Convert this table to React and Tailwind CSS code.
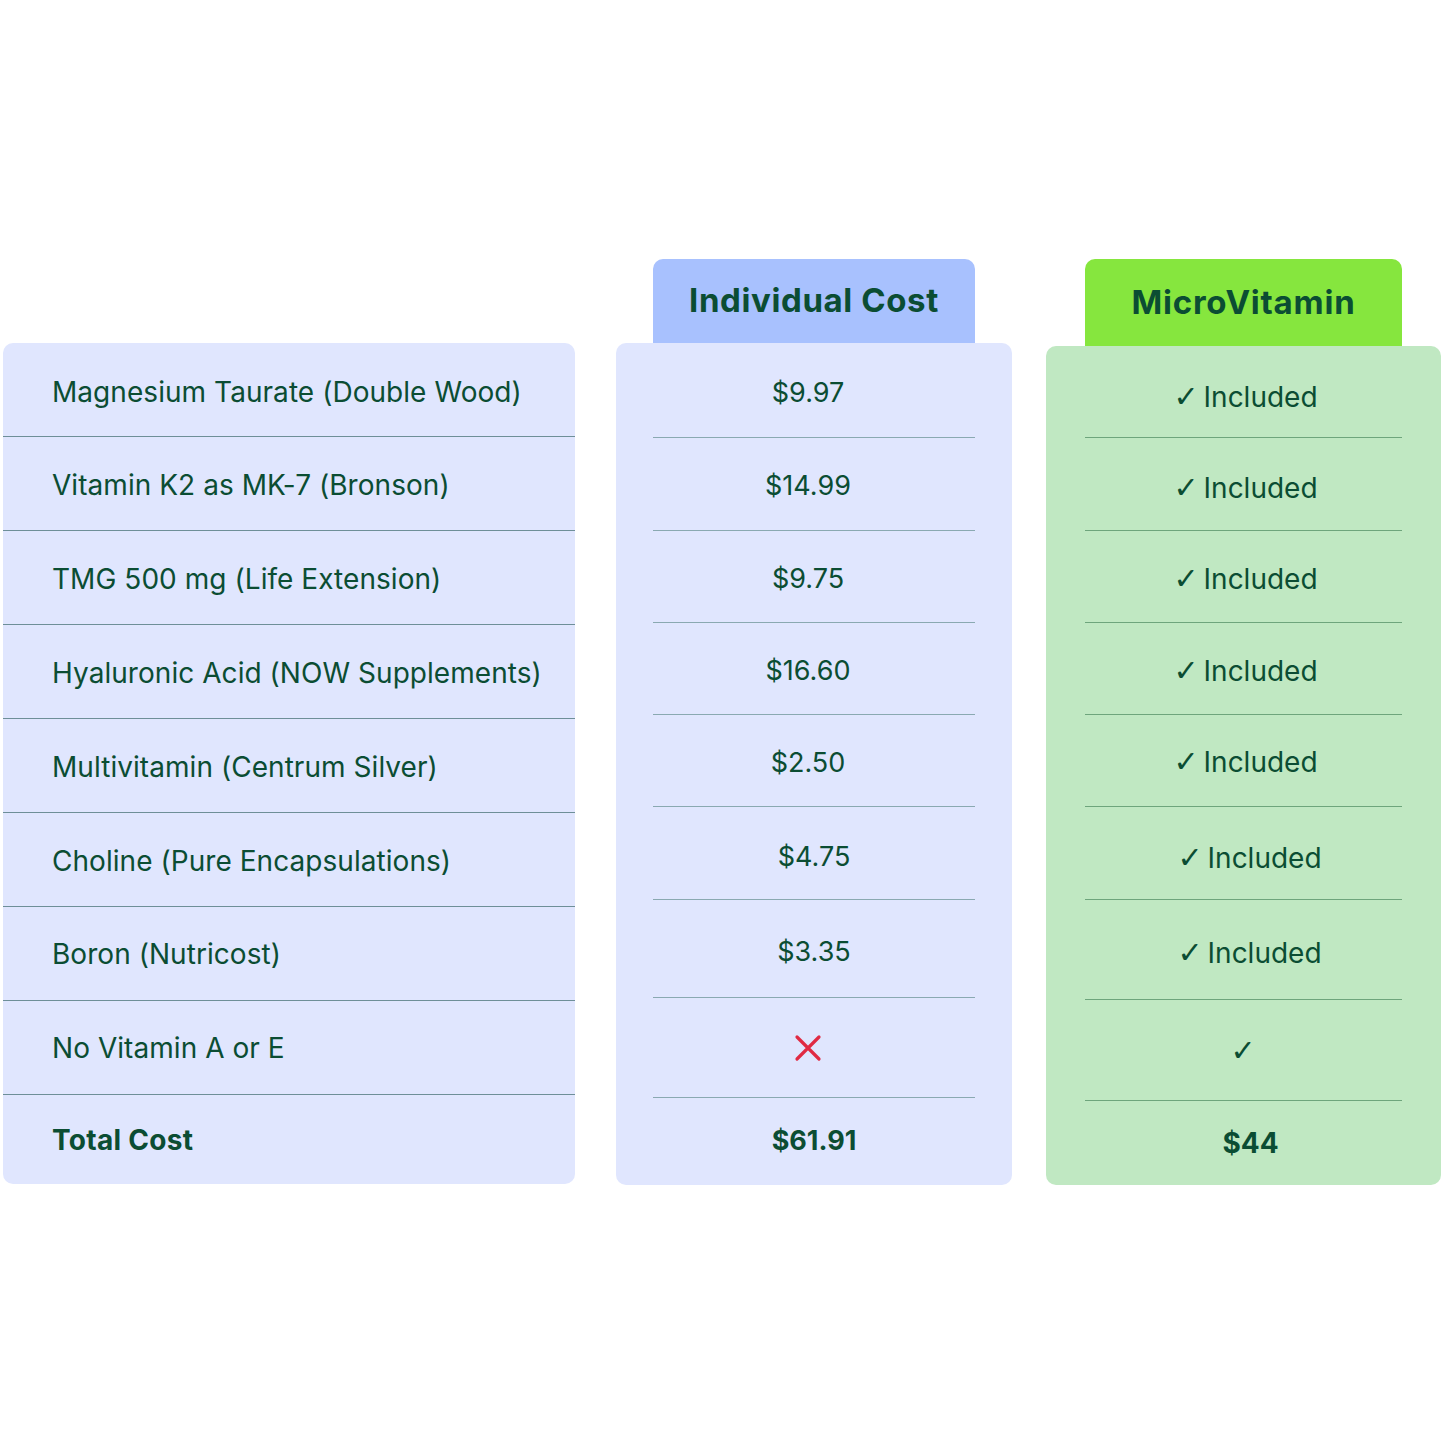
const ink = "text-[#0b4d33]";

const items = [
  "Magnesium Taurate (Double Wood)",
  "Vitamin K2 as MK-7 (Bronson)",
  "TMG 500 mg (Life Extension)",
  "Hyaluronic Acid (NOW Supplements)",
  "Multivitamin (Centrum Silver)",
  "Choline (Pure Encapsulations)",
  "Boron (Nutricost)",
  "No Vitamin A or E",
];

// price, row height and a small nudge, read off the reference (the panels drift a little)
const prices = [
  { p: "$9.97", h: "h-[95px]", nudge: "pt-[7px] pr-[12px]" },
  { p: "$14.99", h: "h-[93px]", nudge: "pt-[5px] pr-[12px]" },
  { p: "$9.75", h: "h-[92px]", nudge: "pt-[5px] pr-[12px]" },
  { p: "$16.60", h: "h-[92px]", nudge: "pt-[5px] pr-[12px]" },
  { p: "$2.50", h: "h-[92px]", nudge: "pt-[6px] pr-[12px]" },
  { p: "$4.75", h: "h-[93px]", nudge: "pt-[8px] pr-0" },
  { p: "$3.35", h: "h-[98px]", nudge: "pt-[8px] pr-0" },
  { p: null, h: "h-[100px]", nudge: "pt-0 pr-[12px]" },
];

const greenRows = [
  { h: "h-[92px]", nudge: "pt-[10px] pl-[4px]" },
  { h: "h-[93px]", nudge: "pt-[8px] pl-[4px]" },
  { h: "h-[92px]", nudge: "pt-[5px] pl-[4px]" },
  { h: "h-[92px]", nudge: "pt-[4px] pl-[4px]" },
  { h: "h-[92px]", nudge: "pt-[2px] pl-[4px]" },
  { h: "h-[93px]", nudge: "pt-[9px] pl-[12px]" },
  { h: "h-[100px]", nudge: "pt-[6px] pl-[12px]" },
  { h: "h-[101px]", nudge: "pt-[2px] pl-[4px]" },
];

const leftNudge = ["pt-[4px]", "pt-[2px]", "pt-[2px]", "pt-[2px]", "pt-[2px]", "pt-[2px]", "pt-0", "pt-0"];

const Cross = () => (
  <svg width="28" height="28" viewBox="0 0 28 28" fill="none">
    <path d="M3 3L25 25M25 3L3 25" stroke="#e02a43" strokeWidth="3.2" strokeLinecap="round" />
  </svg>
);

export default function App() {
  return (
    <div
      className={`w-[1445px] h-[1445px] bg-white ${ink}`}
      style={{ fontFamily: "Inter, 'Open Sans', sans-serif" }}
    >
      <div className="flex items-start pt-[259px] pl-[3px]">
        {/* Product names */}
        <div className="mt-[84px] w-[572px] h-[841px] bg-[#e0e6fe] rounded-[10px] flex flex-col overflow-hidden">
          {items.map((name, i) => (
            <div
              key={name}
              className={`h-[94px] ${leftNudge[i]} shrink-0 flex items-center pl-[49px] border-b-[1.5px] border-[#6e8f98] text-[28px] tracking-[0.05px]`}
            >
              {name}
            </div>
          ))}
          <div className="flex-1 flex items-center pl-[49px] text-[28px] font-bold tracking-[0.3px]">Total Cost</div>
        </div>

        {/* Individual cost */}
        <div className="ml-[41px] w-[396px] flex flex-col">
          <div className="mx-[37px] h-[84px] bg-[#a8c1fe] rounded-t-[10px] flex items-center justify-center text-[33px] font-bold tracking-[0.6px]">
            Individual Cost
          </div>
          <div className="h-[842px] bg-[#e0e6fe] rounded-[10px] flex flex-col px-[37px]">
            {prices.map((r, i) => (
              <div
                key={i}
                className={`${r.h} ${r.nudge} shrink-0 flex items-center justify-center border-b-[1.5px] border-[#8aa9b1] text-[27px]`}
              >
                {r.p ? r.p : <Cross />}
              </div>
            ))}
            <div className="flex-1 flex items-center justify-center text-[27px] font-bold">$61.91</div>
          </div>
        </div>

        {/* MicroVitamin */}
        <div className="ml-[34px] w-[395px] flex flex-col">
          <div className="mx-[39px] h-[87px] bg-[#86e63e] rounded-t-[10px] flex items-center justify-center text-[33px] font-bold tracking-[0.8px]">
            MicroVitamin
          </div>
          <div className="h-[839px] bg-[#c0e8c2] rounded-[10px] flex flex-col px-[39px]">
            {greenRows.map((r, i) => (
              <div
                key={i}
                className={`${r.h} ${r.nudge} shrink-0 flex items-center justify-center border-b-[1.5px] border-[#6ea57c] text-[28px]`}
              >
                <span style={{ fontFamily: "'DejaVu Sans', sans-serif" }} className="text-[30px] leading-none mr-[5px]">
                  ✓
                </span>
                {i < 7 ? "Included" : null}
              </div>
            ))}
            <div className="flex-1 flex items-center justify-center pl-[14px] text-[28px] font-bold">$44</div>
          </div>
        </div>
      </div>
    </div>
  );
}
